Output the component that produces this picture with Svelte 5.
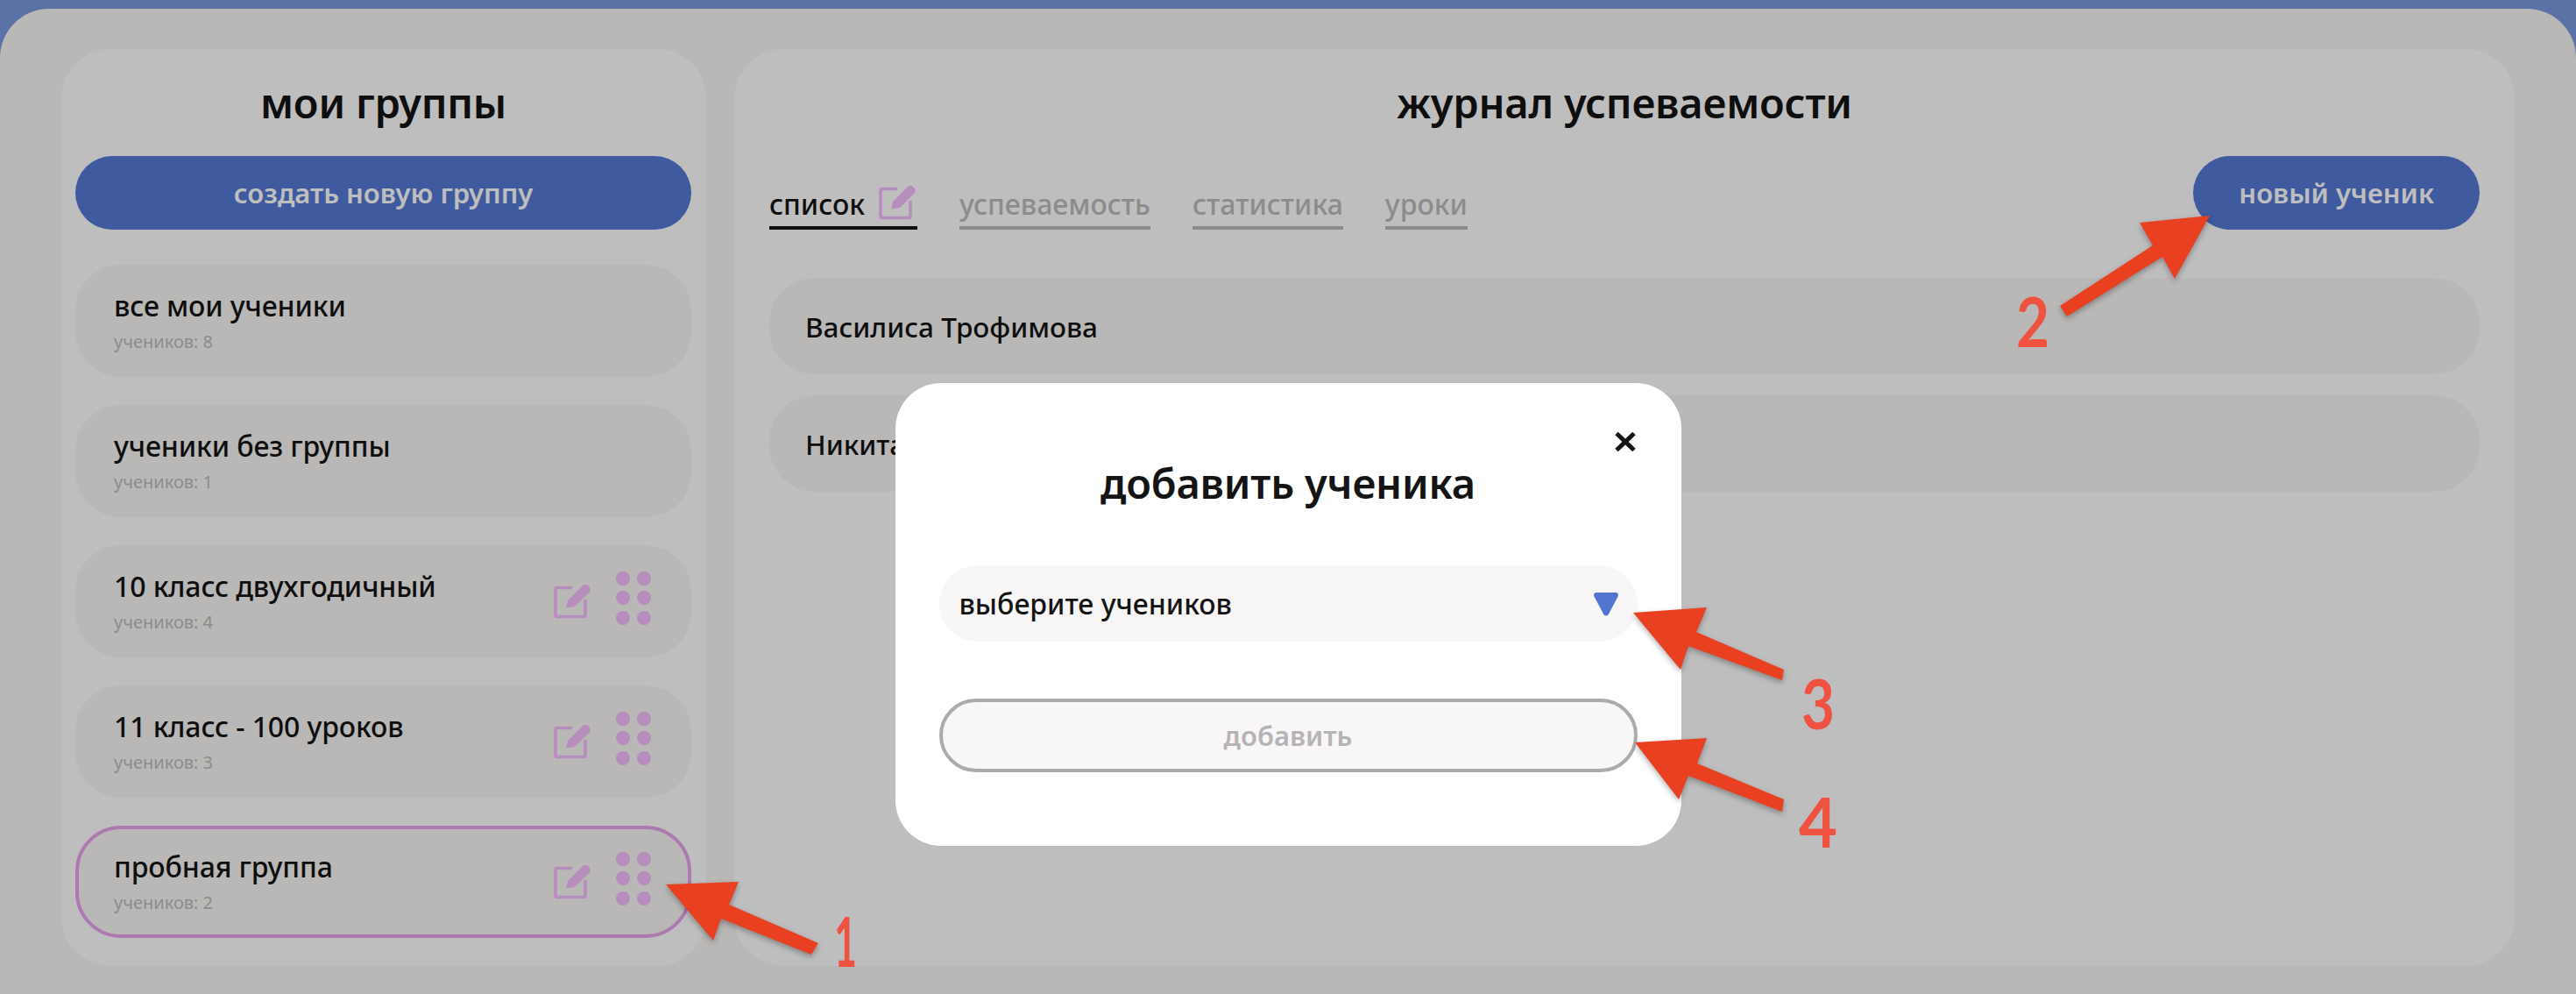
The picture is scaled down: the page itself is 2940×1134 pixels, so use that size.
<script>
  const groups = [
    { name: 'все мои ученики', count: 8, tools: false },
    { name: 'ученики без группы', count: 1, tools: false },
    { name: '10 класс двухгодичный', count: 4, tools: true },
    { name: '11 класс - 100 уроков', count: 3, tools: true },
    { name: 'пробная группа', count: 2, tools: true, active: true }
  ];

  const tabs = ['успеваемость', 'статистика', 'уроки'];
  const students = ['Василиса Трофимова', 'Никита Смирнов'];

  const arrows = [
    '760,1009 843,1006 832,1032 934,1076 926,1089 823,1048 814,1073',
    '2522,246 2442,254 2457,280 2351,349 2359,361 2468,293 2482,318',
    '1864,699 1948,693 1936,721 2036,764 2034,776 1927,737 1918,764',
    '1866,847 1948,842 1937,871 2036,912 2034,926 1927,885 1916,912'
  ];

  const labels = [
    { n: 1, x: 965, y: 1103, w: 26 },
    { n: 2, x: 2320, y: 396, w: 38 },
    { n: 3, x: 2075, y: 832, w: 38 },
    { n: 4, x: 2075, y: 967, w: 44 }
  ];
</script>

{#snippet editIcon()}
  <svg class="edit" viewBox="0 0 44 42" aria-hidden="true">
    <path class="frame" d="M21 5.500H3.500A1.500 1.500 0 0 0 2 7v30a1.500 1.500 0 0 0 1.500 1.500h31A1.500 1.500 0 0 0 36 37V19" />
    <path class="pencil" d="M14 28.500 16 20 33 3q3-2.500 6 0l1.500 1.500q2.500 3 0 6L24 27Z" />
  </svg>
{/snippet}

<div class="page">
  <div class="shell">
    <aside class="panel groups">
      <h2>мои группы</h2>
      <button class="primary wide">создать новую группу</button>
      <ul class="group-list">
        {#each groups as g}
          <li class="group" class:active={g.active}>
            <div class="group-text">
              <span class="group-name">{g.name}</span>
              <span class="group-count">учеников: {g.count}</span>
            </div>
            {#if g.tools}
              <div class="tools">
                {@render editIcon()}
                <span class="dots">
                  {#each Array(6) as _}<i></i>{/each}
                </span>
              </div>
            {/if}
          </li>
        {/each}
      </ul>
    </aside>

    <main class="panel journal">
      <h2>журнал успеваемости</h2>
      <div class="bar">
        <nav class="tabs">
          <span class="tab current">список {@render editIcon()}</span>
          {#each tabs as t}
            <span class="tab">{t}</span>
          {/each}
        </nav>
        <button class="primary">новый ученик</button>
      </div>
      <ul class="students">
        {#each students as s}
          <li>{s}</li>
        {/each}
      </ul>
    </main>
  </div>

  <div class="backdrop">
    <div class="modal">
      <button class="close" aria-label="закрыть">
        <svg viewBox="0 0 26 24"><path d="M3 2.500 23 21.500M23 2.500 3 21.500" /></svg>
      </button>
      <h2>добавить ученика</h2>
      <div class="select">
        <span>выберите учеников</span>
        <svg class="caret" viewBox="0 0 28 28"><path d="M3 1h22a3 3 0 0 1 2.800 4L17 25.500a3.200 3.200 0 0 1-6 0L.2 5A3 3 0 0 1 3 1Z" /></svg>
      </div>
      <button class="add">добавить</button>
    </div>
  </div>

  <svg class="notes" viewBox="0 0 2940 1134">
    {#each arrows as points}
      <polygon {points} />
    {/each}
    {#each labels as l}
      <text x={l.x} y={l.y} textLength={l.w} lengthAdjust="spacingAndGlyphs">{l.n}</text>
    {/each}
  </svg>
</div>

<style>
  :global(body) {
    margin: 0;
    font-family: 'Noto Sans', sans-serif;
    color: #141414;
  }

  .page {
    position: relative;
    width: 2940px;
    height: 1134px;
    overflow: hidden;
    padding-top: 10px;
    box-sizing: border-box;
    background: #7a9ae1;
  }

  .shell {
    display: flex;
    gap: 32px;
    height: 100%;
    box-sizing: border-box;
    padding: 46px 70px 32px;
    background: #f8f7f4;
    border-radius: 56px 56px 0 0;
  }

  .panel {
    background: #ffffff;
    border-radius: 56px;
    box-sizing: border-box;
    padding-top: 37px;
  }

  .groups {
    width: 736px;
    padding-left: 16px;
    padding-right: 17px;
  }

  .journal {
    flex: 1;
    padding-left: 40px;
    padding-right: 40px;
  }

  h2 {
    margin: 0;
    font-size: 47px;
    line-height: 48px;
    font-weight: 600;
    text-align: center;
    letter-spacing: -0.2px;
  }

  .primary {
    height: 84px;
    padding: 0 52px;
    border: 0;
    border-radius: 42px;
    background: #5579d5;
    color: #fff;
    font: 600 31px 'Noto Sans', sans-serif;
  }

  .wide {
    width: 100%;
    margin-top: 37px;
  }

  ul {
    list-style: none;
    margin: 0;
    padding: 0;
  }

  .group-list {
    display: flex;
    flex-direction: column;
    gap: 32px;
    margin-top: 40px;
  }

  .group {
    display: flex;
    align-items: center;
    justify-content: space-between;
    height: 128px;
    box-sizing: border-box;
    padding: 0 46px 0 44px;
    border-radius: 52px;
    background: #f8f7f4;
  }

  .group.active {
    border: 4px solid #e7a4ec;
    padding: 0 42px 0 40px;
  }

  .group-text {
    display: flex;
    flex-direction: column;
    gap: 9px;
    margin-top: -2px;
  }

  .group-name {
    font-size: 32px;
    line-height: 40px;
    font-weight: 500;
    letter-spacing: -0.1px;
  }

  .group-count {
    font-size: 20px;
    line-height: 24px;
    color: #bcbcbc;
  }

  .tools {
    display: flex;
    align-items: center;
    gap: 27px;
  }

  .edit {
    width: 44px;
    height: 42px;
    flex: none;
  }

  .frame {
    fill: none;
    stroke: #f6bdff;
    stroke-width: 3.500;
  }

  .pencil {
    fill: #f6bdff;
  }

  .dots {
    display: grid;
    grid-template-columns: repeat(2, 16px);
    grid-auto-rows: 16px;
    gap: 6.500px 8px;
    margin-bottom: 8px;
  }

  .dots i {
    border-radius: 50%;
    background: #f6bdff;
  }

  .bar {
    display: flex;
    justify-content: space-between;
    align-items: flex-end;
    margin-top: 37px;
  }

  .tabs {
    display: flex;
    gap: 48px;
  }

  .tab {
    display: flex;
    align-items: flex-end;
    gap: 16px;
    height: 50px;
    box-sizing: border-box;
    padding-bottom: 6px;
    border-bottom: 4px solid #bcbcbc;
    font-size: 32px;
    line-height: 38px;
    font-weight: 500;
    color: #bcbcbc;
  }

  .tab.current {
    color: #141414;
    border-color: #141414;
  }

  .students {
    display: flex;
    flex-direction: column;
    gap: 24px;
    margin-top: 55px;
  }

  .students li {
    display: flex;
    align-items: center;
    height: 110px;
    padding-left: 41px;
    border-radius: 52px;
    background: #f8f7f4;
    font-size: 31.500px;
    font-weight: 500;
  }

  .backdrop {
    position: absolute;
    inset: 0;
    display: flex;
    justify-content: center;
    align-items: flex-start;
    box-sizing: border-box;
    padding-top: 437px;
    background: rgba(0, 0, 0, 0.255);
  }

  .modal {
    position: relative;
    width: 897px;
    height: 528px;
    box-sizing: border-box;
    padding: 90px 50px 0;
    border-radius: 52px;
    background: #fff;
  }

  .close {
    position: absolute;
    top: 55px;
    right: 51px;
    width: 26px;
    height: 24px;
    padding: 0;
    border: 0;
    background: none;
  }

  .close svg {
    display: block;
    fill: none;
    stroke: #141414;
    stroke-width: 5;
  }

  .select {
    display: flex;
    align-items: center;
    justify-content: space-between;
    height: 87px;
    margin-top: 70px;
    padding: 0 22px 0 23px;
    border-radius: 44px;
    background: #f9f6f7;
    font-size: 32px;
    font-weight: 500;
  }

  .caret {
    width: 28px;
    height: 28px;
    fill: #5275d0;
  }

  .add {
    display: block;
    width: 100%;
    height: 84px;
    margin-top: 65px;
    border: 4px solid #adaaac;
    border-radius: 42px;
    background: #f9f6f7;
    color: #b5b3b5;
    font: 600 31px 'Noto Sans', sans-serif;
  }

  .notes {
    position: absolute;
    inset: 0;
    width: 2940px;
    height: 1134px;
    pointer-events: none;
  }

  .notes polygon {
    fill: #ea4022;
    filter: drop-shadow(0 3px 3px rgba(0, 0, 0, 0.3));
  }

  .notes text {
    fill: #ef5240;
    font: 700 78px 'Lato', sans-serif;
    text-anchor: middle;
  }
</style>
